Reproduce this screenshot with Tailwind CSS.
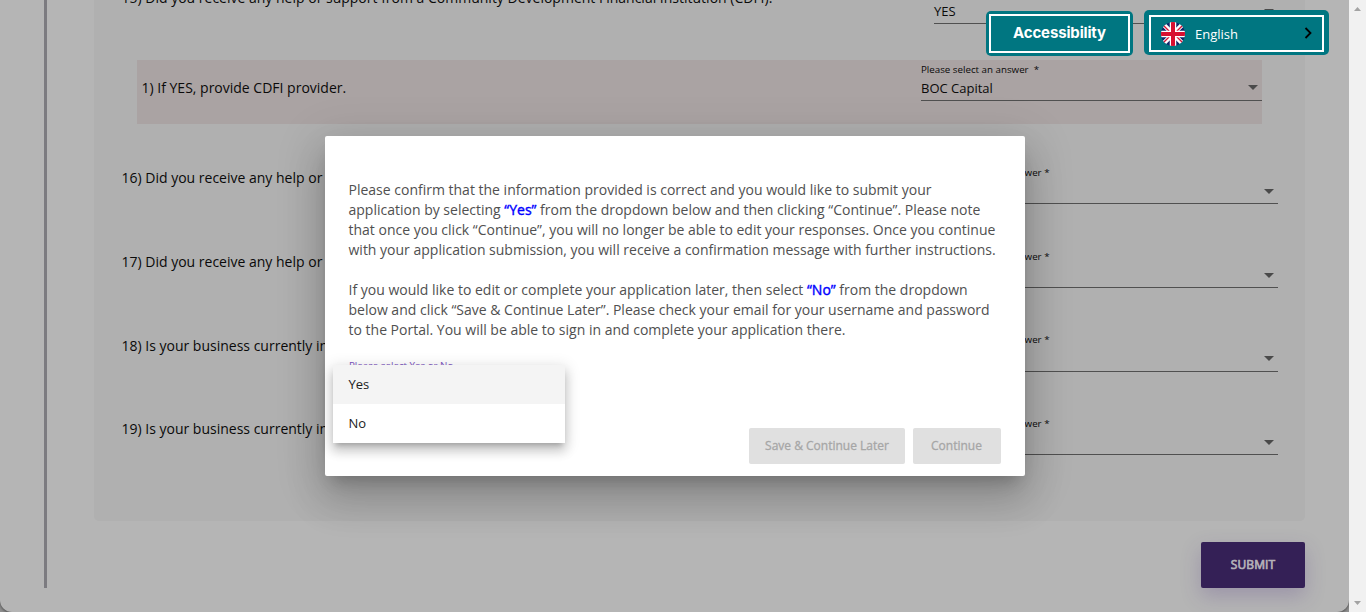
<!DOCTYPE html>
<html lang="en">
<head>
<meta charset="utf-8">
<title>Application</title>
<script src="https://cdn.jsdelivr.net/npm/@tailwindcss/browser@4"></script>
</head>
<body class="relative flex h-[612px] w-[1366px] overflow-hidden bg-[#8f8f8f] font-['Open_Sans',sans-serif] text-sm text-[#0a0a0a]">

<!-- Page -->
<main class="flex h-[612px] w-[1349px] flex-col rounded-b-[12px] bg-[#b5b5b5] pl-[44px] shadow-[0_1px_3px_rgba(0,0,0,.5)]">
  <div class="h-[588px] border-l-[3px] border-[#7c7b80] pl-[47px]">
    <section class="h-[521px] w-[1211px] rounded-b-[5px] bg-[#b0b0b0] pr-[27px] pl-[27.500px]">
      <div class="flex h-[60px] justify-between">
        <p class="-mt-[12px] h-5 leading-5 whitespace-nowrap">15) Did you receive any help or support from a Community Development Financial Institution (CDFI).</p>
        <div class="flex h-[24px] w-[344px] items-start justify-between border-b border-[#505050] pr-1">
          <span class="pt-px text-[13px] leading-5">YES</span>
          <svg class="mt-[9px]" width="10" height="5"><path d="M0 0h10L5 5z" fill="#4a4a4a"/></svg>
        </div>
      </div>
      <div class="ml-[15.500px] flex h-[64px] w-[1125px] justify-between bg-[#aaa3a3] pl-[4.500px]">
        <p class="pt-[18px] leading-5">1) If YES, provide CDFI provider.</p>
        <div class="h-[41px] w-[341px] border-b border-[#505050]">
          <div class="h-[18px] pt-[3px] text-[9.75px] leading-[14px]">Please select an answer&nbsp; *</div>
          <div class="flex items-start justify-between pr-1"><span class="text-[13px] leading-5">BOC Capital</span><svg class="mt-[7px]" width="10" height="5"><path d="M0 0h10L5 5z" fill="#4a4a4a"/></svg></div>
        </div>
      </div>
      <div class="mt-[12px] flex h-[84px] justify-between">
        <p class="pt-[32px] leading-5">16) Did you receive any help or</p>
        <div class="h-[68px] w-[344px] border-b border-[#505050] pt-[30px]"><div class="h-[23px] text-[9.75px] leading-[14px]">Please select an answer *</div><svg class="mr-1 ml-auto" width="10" height="5"><path d="M0 0h10L5 5z" fill="#4a4a4a"/></svg></div>
      </div>
      <div class="flex h-[84px] justify-between">
        <p class="pt-[32px] leading-5">17) Did you receive any help or</p>
        <div class="h-[68px] w-[344px] border-b border-[#505050] pt-[30px]"><div class="h-[23px] text-[9.75px] leading-[14px]">Please select an answer *</div><svg class="mr-1 ml-auto" width="10" height="5"><path d="M0 0h10L5 5z" fill="#4a4a4a"/></svg></div>
      </div>
      <div class="flex h-[83px] justify-between">
        <p class="pt-[32px] leading-5">18) Is your business currently in</p>
        <div class="h-[68px] w-[344px] border-b border-[#505050] pt-[29px]"><div class="h-[23px] text-[9.75px] leading-[14px]">Please select an answer *</div><svg class="mr-1 ml-auto" width="10" height="5"><path d="M0 0h10L5 5z" fill="#4a4a4a"/></svg></div>
      </div>
      <div class="flex h-[84px] justify-between">
        <p class="pt-[32px] leading-5">19) Is your business currently in</p>
        <div class="h-[68px] w-[344px] border-b border-[#505050] pt-[30px]"><div class="h-[23px] text-[9.75px] leading-[14px]">Please select an answer *</div><svg class="mr-1 ml-auto" width="10" height="5"><path d="M0 0h10L5 5z" fill="#4a4a4a"/></svg></div>
      </div>
    </section>
    <div class="flex w-[1211px] justify-end pt-[21px]">
      <button class="h-[46px] w-[104px] rounded-[2px] bg-[#342056] text-xs tracking-[0.100px] text-[#b4b1b8] shadow-[0_8px_20px_rgba(80,50,130,.25)] [-webkit-text-stroke:0.700px_#b4b1b8]">SUBMIT</button>
    </div>
  </div>
</main>

<!-- Scrollbar -->
<aside class="flex h-[612px] w-[17px] flex-col items-center justify-between bg-[#f1f1f1] pt-[7px] pb-[7px]">
  <svg width="7" height="4"><path d="M0 4h7L3.500 0z" fill="#a3a3a3"/></svg>
  <svg width="7" height="4"><path d="M0 0h7L3.500 4z" fill="#a3a3a3"/></svg>
</aside>

<!-- Dialog -->
<div class="absolute top-[136px] left-[325px] flex h-[340px] w-[700px] flex-col rounded-[2px] bg-white pr-6 pl-[23.500px] pt-11 pb-3 text-[#505050] shadow-[0_11px_15px_-7px_rgba(0,0,0,.2),0_24px_38px_3px_rgba(0,0,0,.14),0_9px_46px_8px_rgba(0,0,0,.12)]">
  <p class="leading-5 whitespace-nowrap">Please confirm that the information provided is correct and you would like to submit your<br>application by selecting <span class="text-[#0000ff] [-webkit-text-stroke:0.400px_#0000ff]">“Yes”</span> from the dropdown below and then clicking “Continue”. Please note<br>that once you click “Continue”, you will no longer be able to edit your responses. Once you continue<br>with your application submission, you will receive a confirmation message with further instructions.</p>
  <p class="mt-5 leading-5 whitespace-nowrap">If you would like to edit or complete your application later, then select <span class="text-[#0000ff] [-webkit-text-stroke:0.400px_#0000ff]">“No”</span> from the dropdown<br>below and click “Save &amp; Continue Later”. Please check your email for your username and password<br>to the Portal. You will be able to sign in and complete your application there.</p>
  <div class="mt-[19px] pl-[0.500px] text-[9.75px] leading-[14px] text-[#7b52bd]">Please select Yes or No</div>
  <div class="mt-auto flex justify-end gap-2 text-xs text-[#a6a6a6] [-webkit-text-stroke:0.3px_#a6a6a6]">
    <button class="h-9 w-[156px] rounded-[2px] bg-[#e0e0e0]">Save &amp; Continue Later</button>
    <button class="h-9 w-[88px] rounded-[2px] bg-[#e0e0e0] pr-px">Continue</button>
  </div>
</div>

<!-- Open select menu -->
<ul class="absolute top-[365px] left-[333px] w-[232px] bg-white text-[13px] leading-[39px] text-[#212121] shadow-[0_5px_5px_-3px_rgba(0,0,0,.2),0_8px_10px_1px_rgba(0,0,0,.14),0_3px_14px_2px_rgba(0,0,0,.12)]">
  <li class="h-[39px] bg-[#f4f4f4] pl-[15.500px]">Yes</li>
  <li class="h-[39px] pl-[15.500px]">No</li>
</ul>

<!-- Floating controls -->
<button class="absolute top-[11px] left-[986px] h-[45px] w-[147px] rounded-[5px] bg-[#007681] p-[3px]"><span class="flex h-full items-center justify-center border-2 border-white pb-[2px] font-['Inter',sans-serif] text-[15px] font-bold tracking-[-0.150px] text-white">Accessibility</span></button>
<div class="absolute top-[10px] left-[1144px] h-[45px] w-[185px] rounded-[5px] bg-[#007681] p-[5px] pb-[3px]">
  <div class="flex h-[37px] w-[175px] items-center border-2 border-white pr-[10px] pl-[10px] text-[13px] text-white">
    <svg width="24" height="24" viewBox="0 0 24 24"><defs><clipPath id="c"><circle cx="12" cy="12" r="12"/></clipPath></defs><g clip-path="url(#c)"><path fill="#12296b" d="M0 0h24v24H0z"/><path d="M0 0l24 24M24 0L0 24" stroke="#fff" stroke-width="4.500"/><path d="M2 3l7 7M22 3l-7 7M2 21l7-7M22 21l-7-7" stroke="#d80f30" stroke-width="1.400"/><path d="M12 0v24M0 12h24" stroke="#fff" stroke-width="6.500"/><path d="M12 0v24M0 12h24" stroke="#d80f30" stroke-width="4"/></g></svg>
    <span class="ml-[10px] pt-[2px]">English</span>
    <svg class="ml-auto -mt-[2px]" width="8" height="12" viewBox="0 0 8 12"><path d="M1.500 1L6.500 6l-5 5" fill="none" stroke="#000" stroke-width="1.800"/></svg>
  </div>
</div>
</body>
</html>
